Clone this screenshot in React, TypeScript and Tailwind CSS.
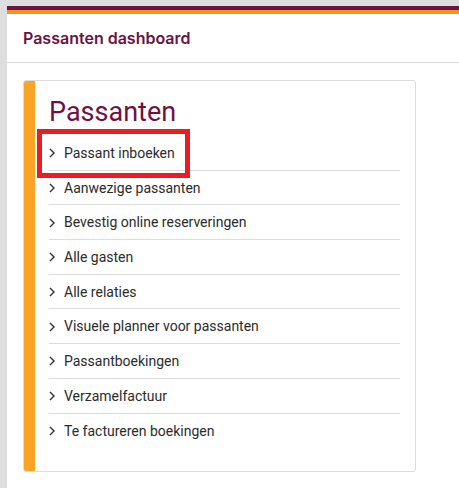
const ITEMS = [
  "Passant inboeken",
  "Aanwezige passanten",
  "Bevestig online reserveringen",
  "Alle gasten",
  "Alle relaties",
  "Visuele planner voor passanten",
  "Passantboekingen",
  "Verzamelfactuur",
  "Te factureren boekingen",
];

function Chevron() {
  return (
    <svg width="6" height="10" viewBox="0 0 6 10" className="shrink-0">
      <polyline points="1,1 5,5 1,9" fill="none" stroke="#333" strokeWidth="1.4" />
    </svg>
  );
}

export default function App() {
  return (
    <div
      className="relative h-[488px] w-[459px] overflow-hidden bg-[#dedede] pl-[7px] pt-[6px]"
      style={{ fontFamily: "Inter, 'Noto Sans', sans-serif" }}
    >
      <div className="h-full bg-white">
        <div className="h-[4px] bg-[#6d1145]" />
        <div className="h-[4px] bg-[#f7901e]" />
        <div className="flex h-[49px] items-center border-b border-[#dcdcdc] pl-[16px]">
          <h1 className="text-[16px] font-semibold text-[#6d1145]">Passanten dashboard</h1>
        </div>

        <div
          className="ml-[16px] mt-[17px] flex h-[392px] w-[393px] overflow-hidden rounded-[3px] border border-[#dcdcdc]"
          style={{ fontFamily: "Roboto, 'Noto Sans', sans-serif" }}
        >
          <div className="w-[11px] shrink-0 bg-[#faa425]" />
          <div className="flex-1 pl-[14px] pr-[15px] pt-[14px]">
            <h2 className="text-[27px] leading-[34px] text-[#6d1145]">Passanten</h2>
            <ul className="mt-[7px]">
              {ITEMS.map((item, i) => (
                <li
                  key={item}
                  className={`flex h-[34.7px] items-center gap-[9px] pt-[1px] text-[14px] text-[#2b2b2b] ${
                    i < ITEMS.length - 1 ? "border-b border-[#dcdcdc]" : ""
                  }`}
                >
                  <Chevron />
                  <span>{item}</span>
                </li>
              ))}
            </ul>
          </div>
        </div>
      </div>

      {/* annotatie-kader rond het eerste item */}
      <div className="absolute left-[37px] top-[129px] h-[49px] w-[153px] border-[5px] border-[#ec1c24]" />
    </div>
  );
}
